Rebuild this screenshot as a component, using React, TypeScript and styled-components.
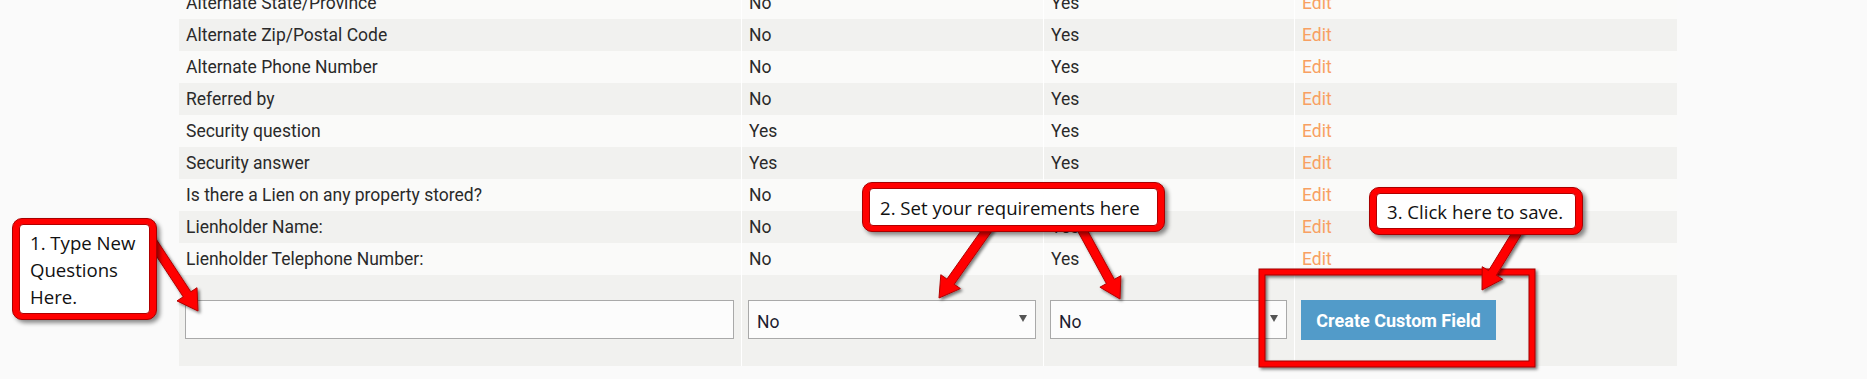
import styled, { createGlobalStyle } from 'styled-components';

const GlobalStyle = createGlobalStyle`
  html, body {
    margin: 0;
    padding: 0;
    background: #fafafa;
    overflow: hidden;
  }
  * {
    box-sizing: border-box;
  }
`;

const Page = styled.div`
  position: relative;
  width: 1867px;
  height: 379px;
  overflow: hidden;
  font-family: Roboto, 'Liberation Sans', sans-serif;
`;

const Table = styled.div`
  margin: -13px 0 0 179px;
  width: 1498px;
`;

const Row = styled.div<{ $shade: boolean }>`
  display: grid;
  grid-template-columns: 562px 302px 251px 383px;
  height: 32px;
  background: ${(p) => (p.$shade ? '#f1f1ef' : '#fafaf9')};
`;

const FormRow = styled(Row)`
  height: 91px;
`;

const Cell = styled.div`
  padding: 0 7px;
  line-height: 32px;
  font-size: 17.5px;
  color: #2a2a2a;
  white-space: nowrap;
  overflow: hidden;

  & + & {
    border-left: 1px solid #ffffff;
  }
`;

const FormCell = styled(Cell)`
  padding: 25px 7px 0 6px;
`;

const EditLink = styled.a`
  color: #f8a062;
  text-decoration: none;
`;

const TextInput = styled.input`
  display: block;
  width: 100%;
  height: 39px;
  border: 1px solid #a9a9a9;
  background: #fcfcfc;
  padding: 0 8px;
  font: inherit;
`;

const SelectBox = styled.div`
  position: relative;
  height: 39px;

  &::after {
    content: '';
    position: absolute;
    right: 9px;
    top: 15px;
    border-left: 4.5px solid transparent;
    border-right: 4.5px solid transparent;
    border-top: 7px solid #555555;
  }
`;

const Select = styled.select`
  appearance: none;
  width: 100%;
  height: 39px;
  border: 1px solid #a9a9a9;
  border-radius: 0;
  background: #fcfcfc;
  padding: 4px 8px 0;
  font-family: Roboto, 'Liberation Sans', sans-serif;
  font-size: 17.5px;
  color: #1c1c30;
`;

const CreateButton = styled.button`
  width: 195px;
  height: 40px;
  border: none;
  background: #529bc9;
  color: #ffffff;
  font-family: Roboto, 'Liberation Sans', sans-serif;
  font-weight: 700;
  font-size: 18px;
`;

const Overlay = styled.svg`
  position: absolute;
  left: 0;
  top: 0;
  pointer-events: none;
`;

const Callout = styled.div<{ $x: number; $y: number; $w: number; $h: number }>`
  position: absolute;
  left: ${(p) => p.$x}px;
  top: ${(p) => p.$y}px;
  width: ${(p) => p.$w}px;
  height: ${(p) => p.$h}px;
  padding: 5px 6px;
  background: #ff0000;
  border: 1px solid #a80000;
  border-radius: 10px;
  box-shadow: 3px 3px 4px rgba(0, 0, 0, 0.45);
`;

const CalloutBody = styled.div<{ $lh: number }>`
  height: 100%;
  background: #ffffff;
  border-radius: 4px;
  border: 1px solid #b00000;
  padding: 0 6px 0 10px;
  font-family: 'Open Sans', 'Noto Sans', sans-serif;
  font-size: 18.6px;
  line-height: ${(p) => p.$lh}px;
  color: #111111;
  white-space: pre-line;
`;

type FieldRow = { label: string; required: string; visible: string };

const rows: FieldRow[] = [
  { label: 'Alternate State/Province', required: 'No', visible: 'Yes' },
  { label: 'Alternate Zip/Postal Code', required: 'No', visible: 'Yes' },
  { label: 'Alternate Phone Number', required: 'No', visible: 'Yes' },
  { label: 'Referred by', required: 'No', visible: 'Yes' },
  { label: 'Security question', required: 'Yes', visible: 'Yes' },
  { label: 'Security answer', required: 'Yes', visible: 'Yes' },
  { label: 'Is there a Lien on any property stored?', required: 'No', visible: 'Yes' },
  { label: 'Lienholder Name:', required: 'No', visible: 'Yes' },
  { label: 'Lienholder Telephone Number:', required: 'No', visible: 'Yes' },
];

// thick annotation arrow from (sx,sy) to tip (tx,ty)
function arrow(sx: number, sy: number, tx: number, ty: number) {
  const shaft = 9;
  const headLen = 20;
  const headW = 24;
  const dx = tx - sx;
  const dy = ty - sy;
  const len = Math.hypot(dx, dy);
  const ux = dx / len;
  const uy = dy / len;
  const px = -uy;
  const py = ux;
  const bx = tx - ux * headLen;
  const by = ty - uy * headLen;
  const pts = [
    [sx + (px * shaft) / 2, sy + (py * shaft) / 2],
    [bx + (px * shaft) / 2, by + (py * shaft) / 2],
    [bx + (px * headW) / 2, by + (py * headW) / 2],
    [tx, ty],
    [bx - (px * headW) / 2, by - (py * headW) / 2],
    [bx - (px * shaft) / 2, by - (py * shaft) / 2],
    [sx - (px * shaft) / 2, sy - (py * shaft) / 2],
  ];
  return pts.map((p) => p.map((v) => v.toFixed(1)).join(',')).join(' ');
}

const arrows = [
  [146, 232, 198, 311],
  [990, 226, 939, 298],
  [1080, 226, 1120, 299],
  [1520, 228, 1482, 290],
];

export default function App() {
  return (
    <Page>
      <GlobalStyle />
      <Table>
        {rows.map((r, i) => (
          <Row key={r.label} $shade={i % 2 === 1}>
            <Cell>{r.label}</Cell>
            <Cell>{r.required}</Cell>
            <Cell>{r.visible}</Cell>
            <Cell>
              <EditLink href="#">Edit</EditLink>
            </Cell>
          </Row>
        ))}
        <FormRow $shade={true}>
          <FormCell>
            <TextInput type="text" />
          </FormCell>
          <FormCell>
            <SelectBox>
              <Select defaultValue="No">
                <option>No</option>
                <option>Yes</option>
              </Select>
            </SelectBox>
          </FormCell>
          <FormCell>
            <SelectBox>
              <Select defaultValue="No">
                <option>No</option>
                <option>Yes</option>
              </Select>
            </SelectBox>
          </FormCell>
          <FormCell>
            <CreateButton>Create Custom Field</CreateButton>
          </FormCell>
        </FormRow>
      </Table>

      <Overlay width="1867" height="379" viewBox="0 0 1867 379">
        <defs>
          <filter id="shadow" x="-20%" y="-20%" width="140%" height="140%">
            <feDropShadow dx="2" dy="2" stdDeviation="1.8" floodColor="#000" floodOpacity="0.5" />
          </filter>
        </defs>
        <g filter="url(#shadow)">
          <rect x="1262" y="272" width="270" height="92" fill="none" stroke="#a00000" strokeWidth="7" />
          <rect x="1262" y="272" width="270" height="92" fill="none" stroke="#ff0000" strokeWidth="5" />
        </g>
        <g filter="url(#shadow)">
          {arrows.map((a, i) => (
            <polygon
              key={i}
              points={arrow(a[0], a[1], a[2], a[3])}
              fill="#ff0000"
              stroke="#b00000"
              strokeWidth="1"
              strokeLinejoin="round"
            />
          ))}
        </g>
      </Overlay>

      <Callout $x={12} $y={218} $w={145} $h={102}>
        <CalloutBody $lh={27} style={{ paddingTop: 4 }}>
          {'1. Type New\nQuestions\nHere.'}
        </CalloutBody>
      </Callout>
      <Callout $x={862} $y={182} $w={303} $h={50}>
        <CalloutBody $lh={38}>2. Set your requirements here</CalloutBody>
      </Callout>
      <Callout $x={1369} $y={187} $w={214} $h={48}>
        <CalloutBody $lh={36}>3. Click here to save.</CalloutBody>
      </Callout>
    </Page>
  );
}
